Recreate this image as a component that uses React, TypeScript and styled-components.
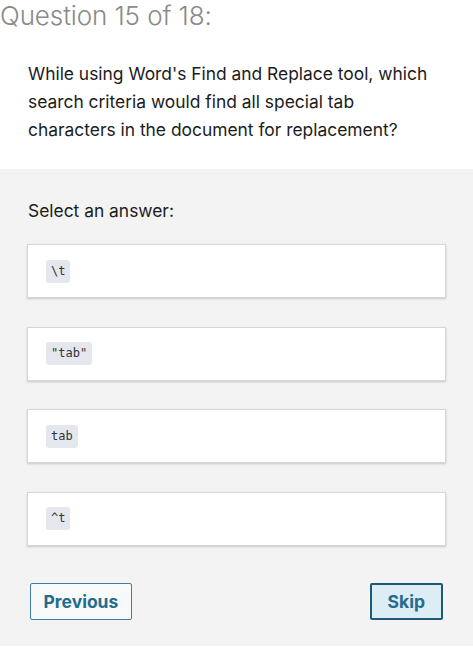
import { createGlobalStyle, styled } from "styled-components";

const GlobalStyle = createGlobalStyle`
  html, body {
    margin: 0;
    padding: 0;
    background: #ffffff;
  }
  body {
    font-family: Inter, "Liberation Sans", sans-serif;
    color: #1f1f1f;
  }
`;

const answers = ["\\t", '"tab"', "tab", "^t"];

export default function App() {
  return (
    <>
      <GlobalStyle />
      <Page>
        <Header>
          <Title>Question 15 of 18:</Title>
          <Question>
            While using Word's Find and Replace tool, which search criteria
            would find all special tab characters in the document for
            replacement?
          </Question>
        </Header>
        <AnswerSection>
          <Prompt>Select an answer:</Prompt>
          <AnswerList>
            {answers.map((a) => (
              <AnswerCard key={a}>
                <Code>{a}</Code>
              </AnswerCard>
            ))}
          </AnswerList>
          <Footer>
            <NavButton>Previous</NavButton>
            <NavButton $primary>Skip</NavButton>
          </Footer>
        </AnswerSection>
      </Page>
    </>
  );
}

const Page = styled.div`
  width: 473px;
  min-height: 667px;
  background: #ffffff;
`;

const Header = styled.div`
  height: 169px;
  box-sizing: border-box;
`;

const Title = styled.h1`
  margin: 0;
  font-family: Inter, "Liberation Sans", sans-serif;
  font-weight: 300;
  font-size: 26px;
  line-height: 32px;
  color: #8a8a8a;
  letter-spacing: -0.1px;
`;

const Question = styled.p`
  margin: 28px 0 0 28px;
  width: 405px;
  font-size: 17.4px;
  line-height: 28px;
  color: #1c1c1c;
`;

const AnswerSection = styled.div`
  background: #f3f3f3;
  padding: 30px 27px 27px 27px;
  height: 477px;
  box-sizing: border-box;
`;

const Prompt = styled.p`
  margin: 0 0 0 1px;
  font-size: 17.4px;
  line-height: 24px;
  color: #1c1c1c;
`;

const AnswerList = styled.div`
  display: flex;
  flex-direction: column;
  gap: 28.5px;
  margin-top: 21px;
`;

const AnswerCard = styled.div`
  height: 54px;
  box-sizing: border-box;
  background: #ffffff;
  border: 1px solid #d6d6d6;
  box-shadow: 0 1px 2px rgba(0, 0, 0, 0.18);
  display: flex;
  align-items: center;
  padding-left: 18px;
`;

const Code = styled.code`
  font-family: "DejaVu Sans Mono", "Liberation Mono", monospace;
  font-size: 12px;
  color: #333;
  background: #e4e8ee;
  border-radius: 3px;
  padding: 4px 5px;
  line-height: 15px;
`;

const Footer = styled.div`
  display: flex;
  justify-content: space-between;
  margin-top: 37px;
  padding: 0 3px;
`;

const NavButton = styled.button<{ $primary?: boolean }>`
  height: 37px;
  padding: 0 ${(p) => (p.$primary ? "16px" : "12.5px")};
  font-family: Inter, "Liberation Sans", sans-serif;
  font-weight: 700;
  font-size: 17.5px;
  color: #256b8c;
  background: ${(p) => (p.$primary ? "#dcedf6" : "#f7f9fa")};
  border: ${(p) => (p.$primary ? "2px solid #1e5a76" : "1.5px solid #3c7f9e")};
  border-radius: 2px;
  cursor: pointer;
`;
